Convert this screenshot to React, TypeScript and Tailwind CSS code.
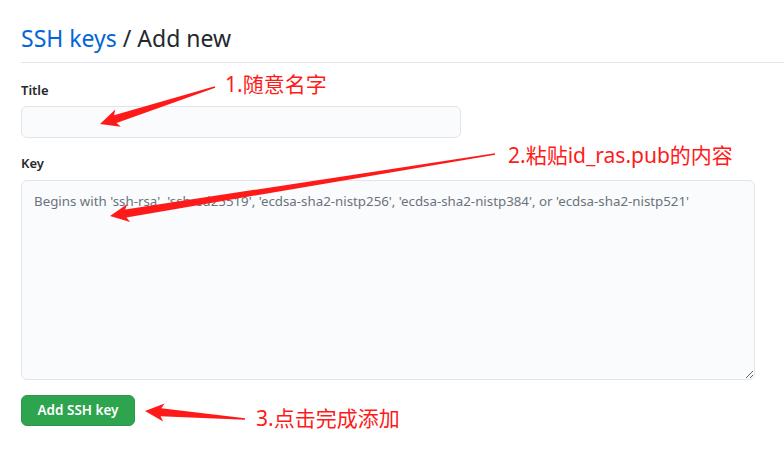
import * as React from "react";

type Pt = [number, number];

function arrowPoints(tail: Pt, tip: Pt, headLen = 16, headW = 18, shaftW = 8, tailW = 1.5) {
    const dx = tip[0] - tail[0];
    const dy = tip[1] - tail[1];
    const len = Math.hypot(dx, dy);
    const ux = dx / len;
    const uy = dy / len;
    const nx = -uy;
    const ny = ux;
    const bx = tip[0] - ux * headLen;
    const by = tip[1] - uy * headLen;
    const wx = bx - ux * 3;
    const wy = by - uy * 3;
    const pts: Pt[] = [
        [tail[0] + (nx * tailW) / 2, tail[1] + (ny * tailW) / 2],
        [bx + (nx * shaftW) / 2, by + (ny * shaftW) / 2],
        [wx + (nx * headW) / 2, wy + (ny * headW) / 2],
        tip,
        [wx - (nx * headW) / 2, wy - (ny * headW) / 2],
        [bx - (nx * shaftW) / 2, by - (ny * shaftW) / 2],
        [tail[0] - (nx * tailW) / 2, tail[1] - (ny * tailW) / 2],
    ];
    return pts.map((p) => `${p[0].toFixed(1)},${p[1].toFixed(1)}`).join(" ");
}

function Annotations() {
    return (
        <>
            <svg className="absolute left-0 top-0 pointer-events-none" width={784} height={460}>
                <polygon points={arrowPoints([215, 87], [100, 124])} fill="#ff1a1a" />
                <polygon points={arrowPoints([495, 154], [110, 216])} fill="#ff1a1a" />
                <polygon points={arrowPoints([245, 419], [145, 411])} fill="#ff1a1a" />
            </svg>
            <span className="absolute left-[225px] top-[70px] text-[21px] leading-[28px] text-[#ff1a1a] whitespace-nowrap">
                1.随意名字
            </span>
            <span className="absolute left-[508px] top-[141px] text-[21px] leading-[28px] text-[#ff1a1a] whitespace-nowrap">
                2.粘贴id_ras.pub的内容
            </span>
            <span className="absolute left-[256px] top-[404px] text-[21px] leading-[28px] text-[#ff1a1a] whitespace-nowrap">
                3.点击完成添加
            </span>
        </>
    );
}

export default function App() {
    return (
        <div
            className="relative w-[784px] h-[460px] bg-white overflow-hidden"
            style={{ fontFamily: '"Noto Sans", "Noto Sans CJK SC", sans-serif' }}
        >
            <div className="pl-[21px] pt-5">
                <div className="border-b border-[#e1e4e8] pb-[6px]">
                    <h2 className="text-[23px] leading-[36px] font-normal text-[#24292e]">
                        <span className="text-[#0366d6]">SSH keys</span> / Add new
                    </h2>
                </div>

                <form className="w-[734px] flex flex-col">
                    <label className="mt-[17px] text-[13px] leading-[20px] font-semibold text-[#24292e]">
                        Title
                    </label>
                    <input
                        type="text"
                        className="mt-[6px] w-[440px] h-[32px] rounded-md border border-[#e1e4e8] bg-[#fafbfc] px-3 text-[13px] outline-none"
                    />

                    <label className="mt-[15px] text-[13px] leading-[20px] font-semibold text-[#24292e]">
                        Key
                    </label>
                    <textarea
                        className="mt-[7px] w-[734px] h-[200px] rounded-md border border-[#e1e4e8] bg-[#fafbfc] px-3 py-[10px] text-[13.3px] leading-[20px] text-[#24292e] placeholder:text-[#6a737d] outline-none"
                        placeholder="Begins with 'ssh-rsa', 'ssh-ed25519', 'ecdsa-sha2-nistp256', 'ecdsa-sha2-nistp384', or 'ecdsa-sha2-nistp521'"
                    />

                    <div className="mt-[15px]">
                        <button
                            type="button"
                            className="w-[114px] h-[31px] rounded-md border border-[#2c974b] bg-[#2ea44f] text-[13.5px] font-semibold text-white"
                        >
                            Add SSH key
                        </button>
                    </div>
                </form>
            </div>

            <Annotations />
        </div>
    );
}
